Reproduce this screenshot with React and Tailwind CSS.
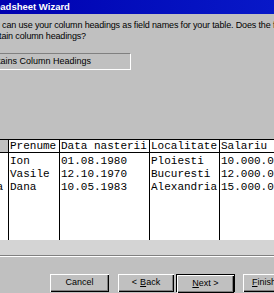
export default function App() {
  const btn =
    "shrink-0 flex items-center justify-center h-[18px] bg-[#c0c0c0] text-[9px] text-black shadow-[inset_1px_1px_#ffffff,inset_-1px_-1px_#000000,inset_-2px_-2px_#808080]";
  const mono = { fontFamily: '"Liberation Mono", monospace' };
  const rows = [
    ["", "Ion", "01.08.1980", "Ploiesti", "10.000.000"],
    ["", "Vasile", "12.10.1970", "Bucuresti", "12.000.000"],
    ["Stoica", "Dana", "10.05.1983", "Alexandria", "15.000.000"],
  ];
  return (
    <div
      className="w-[274px] h-[293px] bg-[#c0c0c0] overflow-hidden flex flex-col"
      style={{ fontFamily: '"Liberation Sans", Arial, sans-serif' }}
    >
      <div className="h-[14px] shrink-0 bg-gradient-to-r from-[#0000b0] to-[#0818c8] flex items-center">
        <span className="ml-[-53px] text-white font-bold text-[9.5px] leading-none whitespace-nowrap">
          Import Spreadsheet Wizard
        </span>
      </div>
      <div className="mt-[6px] ml-[-15px] text-[9px] leading-[11px] tracking-[-0.15px] text-black whitespace-nowrap">
        <div>You can use your column headings as field names for your table. Does the first row</div>
        <div>contain column headings?</div>
      </div>
      <div className="mt-[11px] ml-[-20px] w-[151px] h-[17px] shrink-0 border border-[#808080] border-b-white border-r-white flex items-center">
        <span className="ml-[-40px] text-[9px] whitespace-nowrap">First Row Contains Column Headings</span>
      </div>
      <div className="mt-[69px] h-[101px] shrink-0 bg-white border-t border-black text-[11px] leading-[12px]" style={mono}>
        <div className="flex h-[13px] border-b border-black">
          <div className="w-[9px] shrink-0 bg-[#c0c0c0] border-r border-black"></div>
          <div className="w-[51px] shrink-0 pl-[1px] border-r border-black">Prenume</div>
          <div className="w-[90px] shrink-0 pl-[1px] border-r border-black whitespace-nowrap overflow-hidden">Data nasterii</div>
          <div className="w-[70px] shrink-0 pl-[1px] border-r border-black">Localitate</div>
          <div className="flex-1 pl-[1px] whitespace-nowrap overflow-hidden">Salariu</div>
        </div>
        <div className="flex h-[87px]">
          <div className="w-[9px] shrink-0 border-r border-black overflow-hidden pt-[2px]">
            {rows.map((r, i) => (
              <div key={i} className="h-[13px] leading-[13px] flex justify-end pr-[5px] whitespace-nowrap">{r[0]}</div>
            ))}
          </div>
          {[
            [1, "w-[51px] shrink-0 border-r border-black"],
            [2, "w-[90px] shrink-0 border-r border-black"],
            [3, "w-[70px] shrink-0 border-r border-black"],
            [4, "flex-1"],
          ].map(([c, cls]) => (
            <div key={c} className={cls + " pl-[1px] pt-[2px] overflow-hidden whitespace-nowrap"}>
              {rows.map((r, i) => (
                <div key={i} className="h-[13px] leading-[13px]">{r[c]}</div>
              ))}
            </div>
          ))}
        </div>
      </div>
      <div className="h-[15px] shrink-0 bg-[#d4d4d4]"></div>
      <div className="h-[2px] shrink-0 border-t border-[#808080] border-b border-b-white"></div>
      <div className="flex mt-[17px] shrink-0">
        <div className={btn + " ml-[50px] w-[59px]"}>Cancel</div>
        <div className={btn + " ml-[9px] w-[56px]"}>
          &lt; <span className="underline ml-[3px]">B</span>ack
        </div>
        <div className="shrink-0 ml-[2px] w-[59px] h-[18px] border border-black">
          <div className={btn + " h-[16px] w-full"}>
            <span className="underline">N</span>ext &gt;
          </div>
        </div>
        <div className={btn + " ml-[8px] w-[59px] justify-start pl-[9px]"}>
          <span className="underline">F</span>inish
        </div>
      </div>
    </div>
  );
}
